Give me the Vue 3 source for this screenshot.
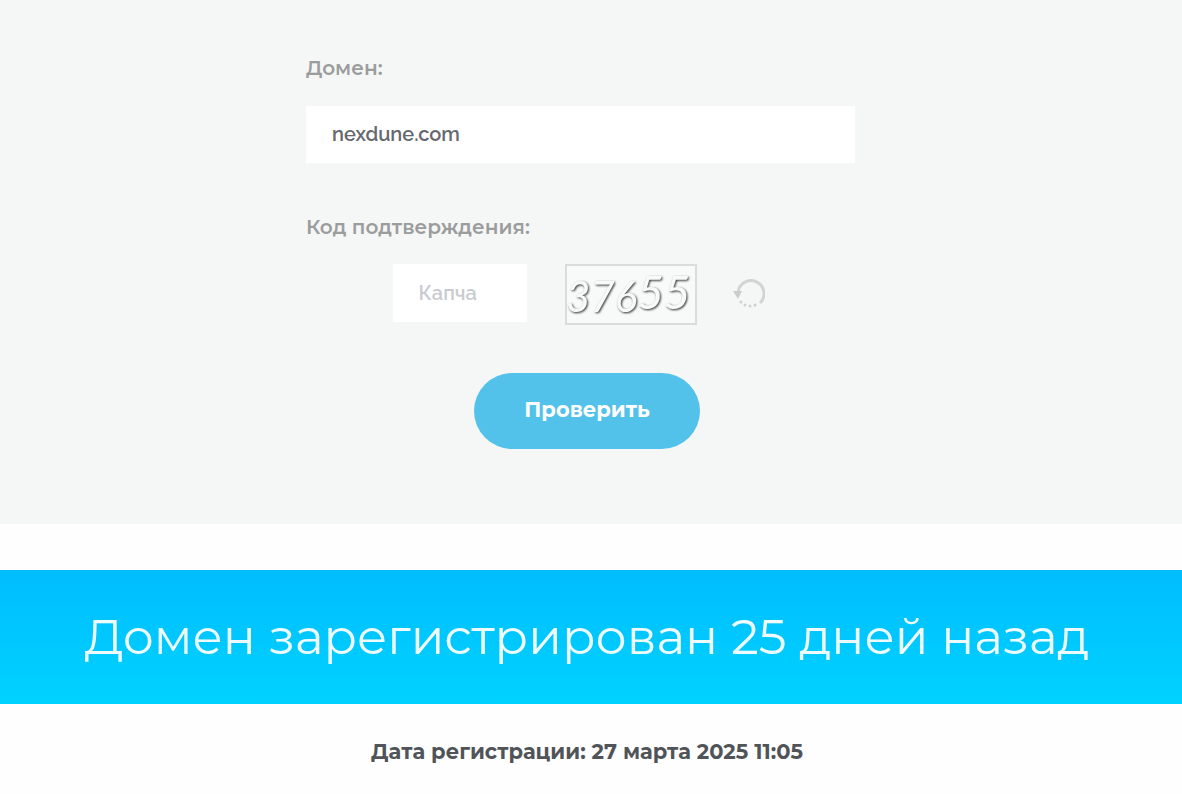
<script setup>
import { ref } from 'vue'

const domain = ref('nexdune.com')
const captcha = ref('')
</script>

<template>
  <main class="page">
    <section class="check">
      <form class="form" @submit.prevent>
        <div class="fields">
          <label class="label" for="domain">Домен:</label>
          <input id="domain" v-model="domain" class="input" type="text" />
          <label class="label label-code" for="captcha">Код подтверждения:</label>
          <div class="captcha-row">
            <input id="captcha" v-model="captcha" class="input input-code" type="text" placeholder="Капча" />
            <svg class="captcha" viewBox="0 0 132 61" role="img" aria-label="37655">
              <rect x="1" y="1" width="130" height="59" fill="#f8fafa" stroke="#d9dcdc" stroke-width="2" />
              <text class="digits" x="1" y="48">376<tspan class="tall" y="45">55</tspan></text>
            </svg>
            <button class="refresh" type="button" aria-label="Обновить код">
              <svg viewBox="0 0 32 32" width="32" height="32" fill="none">
                <path d="M5 15a13 13 0 1 1 22 10" stroke="#d2d4d4" stroke-width="3" />
                <path d="M0 13h9l-4 8z" fill="#cacdcd" />
                <g fill="#ced1d1">
                  <circle cx="8" cy="24" r="1.500" />
                  <circle cx="12" cy="27" r="1.500" />
                  <circle cx="17" cy="28" r="1.500" />
                  <circle cx="22" cy="27" r="1.500" />
                </g>
              </svg>
            </button>
          </div>
        </div>
        <button class="submit" type="submit">Проверить</button>
      </form>
    </section>
    <section class="result">
      <h1 class="banner">Домен зарегистрирован 25 дней назад</h1>
      <p class="date">Дата регистрации: 27 марта 2025 11:05</p>
    </section>
  </main>
</template>

<style>
body {
  margin: 0;
  background: #fefefe;
}
</style>

<style scoped>
.page,
.submit {
  font-family: Montserrat, Inter, "Open Sans", sans-serif;
}
.check {
  box-sizing: border-box;
  padding: 56px 8px 75px 0;
  background: #f5f7f6;
}
.form {
  display: flex;
  flex-direction: column;
  align-items: center;
}
.fields {
  box-sizing: border-box;
  width: 100%;
  max-width: 562px;
  padding-right: 13px;
}
.label {
  display: block;
  margin-bottom: 26px;
  font-size: 20px;
  line-height: 24px;
  font-weight: 600;
  color: #9b9d9d;
}
.label-code {
  margin: 52px 0 25px;
}
.input {
  display: block;
  box-sizing: border-box;
  width: 100%;
  height: 57px;
  padding: 0 26px 2px;
  border: 0;
  outline: 0;
  background: #fff;
  font-family: Raleway, Montserrat, Inter, sans-serif;
  font-size: 20px;
  font-weight: 600;
  color: #65686c;
}
.input::placeholder {
  color: #c9cbd1;
  opacity: 1;
}
.captcha-row {
  display: flex;
  justify-content: center;
  align-items: flex-start;
  padding-right: 4px;
}
.input-code {
  width: 134px;
  height: 58px;
  padding-bottom: 0;
}
.captcha {
  width: 132px;
  height: 61px;
  margin-left: 38px;
  overflow: visible;
}
.digits {
  font-family: Lato, sans-serif;
  font-size: 42px;
  font-style: italic;
  font-weight: 400;
  fill: #f8fafa;
  filter: drop-shadow(1px 1px 1px #333);
}
.tall {
  font-size: 46px;
}
.refresh {
  display: flex;
  margin: 14px 0 0 36px;
  padding: 0;
  border: 0;
  background: none;
  cursor: pointer;
}
.submit {
  width: 226px;
  height: 76px;
  margin-top: 48px;
  padding: 0 0 3px;
  border: 0;
  border-radius: 38px;
  background: #53c2eb;
  color: #fff;
  font-size: 21px;
  font-weight: 700;
  cursor: pointer;
}
.result {
  padding-top: 46px;
}
.banner {
  margin: 0;
  padding: 37px 8px 37px 0;
  background: linear-gradient(#00bdff, #00d2ff);
  color: #effcff;
  font-size: 49px;
  line-height: 60px;
  font-weight: 400;
  text-align: center;
}
.date {
  margin: 0;
  padding: 34px 8px 28px 0;
  color: #505458;
  font-size: 21px;
  line-height: 28px;
  font-weight: 700;
  text-align: center;
}
</style>
